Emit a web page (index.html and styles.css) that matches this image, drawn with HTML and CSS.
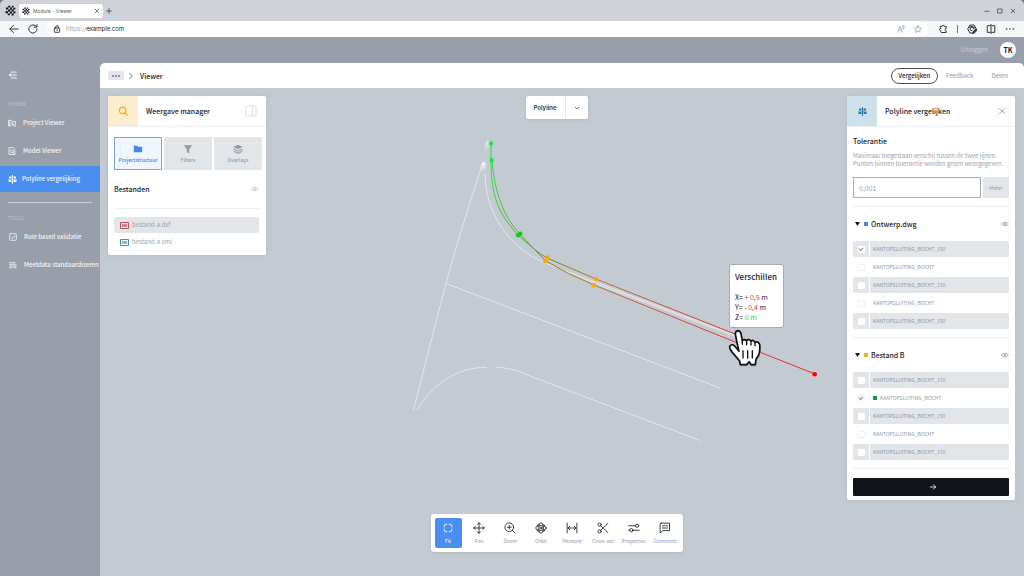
FILE: index.html
```html
<!DOCTYPE html>
<html lang="nl">
<head>
<meta charset="utf-8">
<meta name="viewport" content="width=device-width, initial-scale=1">
<title>Module - Viewer</title>
<link rel="stylesheet" href="styles.css">
</head>
<body>
<svg class="defs" aria-hidden="true">
  <symbol id="mark" viewBox="0 0 12 12"><path d="M3.500 .8h2.200v2H3.500zM7.500 .8h1.800v2H7.500zM1 2.800h2.500v2.200H1zM5.500 2.800h2v2.400h-2zM9 3h2.200v2H9zM3.300 4.900h2.300v2.200H3.300zM7.300 5h2.200v2H7.300zM.6 6.900h2.700v2H.6zM5.300 7h2.200v2.200H5.300zM9.200 7h2.200v2H9.200zM3 9.200h2.300v2H3zM7.300 9.200h2.200v2.200H7.300z"/></symbol>
  <symbol id="eye" viewBox="0 0 12 12"><path d="M.8 6C3.500 2.300 8.500 2.300 11.200 6C8.500 9.700 3.500 9.700 .8 6Z"/><circle cx="6" cy="6" r=".9"/></symbol>
  <symbol id="compare" viewBox="0 0 9 9"><path d="M1 1.500h2.500v2H1zM.5 5h3v2h-3zM5.500 1.500H8v2H5.500zM5.500 5h3v2h-3zM4 0h1v9H4z"/><path d="M0 3.900h9v.8H0z" opacity=".6"/></symbol>
</svg>
<div class="browser">
  <div class="tabs-bar">
    <svg class="logo" aria-hidden="true"><use href="#mark"/></svg>
    <div class="tab">
      <svg class="tab-logo" aria-hidden="true"><use href="#mark"/></svg>
      <span class="tab-title">Module - Viewer</span>
      <button class="bare" aria-label="Sluit tabblad"><svg class="ico ico-6" viewBox="0 0 12 12"><path d="M2 2l8 8M10 2l-8 8"/></svg></button>
    </div>
    <button class="bare new-tab" aria-label="Nieuw tabblad"><svg class="ico ico-6" viewBox="0 0 12 12"><path d="M6 1v10M1 6h10"/></svg></button>
    <div class="window-buttons">
      <button class="bare" aria-label="Minimaliseren"><svg class="ico ico-6" viewBox="0 0 12 12"><path d="M2 6.500h8"/></svg></button>
      <button class="bare" aria-label="Maximaliseren"><svg class="ico ico-6" viewBox="0 0 12 12"><rect x="2" y="2" width="8" height="8"/></svg></button>
      <button class="bare" aria-label="Sluiten"><svg class="ico ico-6" viewBox="0 0 12 12"><path d="M2.500 2.500l7 7M9.500 2.500l-7 7"/></svg></button>
    </div>
  </div>
  <div class="address-bar">
    <button class="bare" aria-label="Terug"><svg class="ico ico-10" viewBox="0 0 12 12"><path d="M11 6H1M5.500 1.500L1 6l4.500 4.500"/></svg></button>
    <button class="bare reload" aria-label="Vernieuwen"><svg class="ico ico-10" viewBox="0 0 12 12"><path d="M10.800 6A4.900 4.900 0 1 1 9 2.200L10.500 3.500M10.700 .6v3.200H7.500"/></svg></button>
    <div class="address">
      <svg class="ico ico-8" viewBox="0 0 12 12"><rect x="2" y="4.500" width="8" height="6.500" rx="1"/><path d="M4 4.500V3a2 2 0 0 1 4 0v1.500M6 7v1.500"/></svg>
      <span class="url"><span class="scheme">https://</span>example.com</span>
      <svg class="ico ico-8 soft" viewBox="0 0 12 12"><path d="M1 11L4.500 2L8 11M2.300 8h4.400M8.300 1.500q1.500 1.500 0 3.500M10 .5q2 2.500 0 5.500"/></svg>
      <svg class="ico ico-8 soft star" viewBox="0 0 12 12"><path d="M6 .8l1.600 3.500 3.800.4-2.800 2.600.8 3.800L6 9.200l-3.400 1.900.8-3.800L.6 4.700l3.800-.4z"/></svg>
    </div>
    <div class="extensions">
      <svg class="ico ico-10" viewBox="0 0 12 12"><path d="M3.200 2.800H5a1.300 1.300 0 0 1 2.600 0h2.200v2.500a1.300 1.300 0 0 0 0 2.600v2.300H4.500A1.300 1.300 0 0 1 3.200 9V7.800a1.300 1.300 0 0 1 0-2.600z"/></svg>
      <span class="rule"></span>
      <svg class="ico ico-10" viewBox="0 0 12 12"><path d="M6.500 10.800H3.500L.8 6l2.700-4.800h5L11.200 6M2 4.200L6 2.800l3.500 2"/><path d="M6 8.200A2.200 2.200 0 1 1 8.200 6"/><path d="M11.200 6.500v2L8 11.500H6.500L8 8.500z" fill="currentColor"/></svg>
      <svg class="ico ico-10" viewBox="0 0 12 12"><path d="M5 2H1.500v8H5M7 2h3.500v8H7M6 .5v11"/></svg>
      <svg class="ico ico-10" viewBox="0 0 12 12"><g fill="currentColor" stroke="none"><circle cx="2" cy="6" r="1"/><circle cx="6" cy="6" r="1"/><circle cx="10" cy="6" r="1"/></g></svg>
    </div>
  </div>

  <div class="app">
    <header class="user-bar">
      <a class="logout" href="#">Uitloggen</a>
      <span class="avatar">TK</span>
    </header>
    <div class="app-body">
      <nav class="sidebar">
        <button class="bare collapse" aria-label="Menu inklappen"><svg class="ico ico-10" viewBox="0 0 12 12"><path d="M4 2.500h6M5 6h5M4 9.500h6"/><path d="M.5 6l3.500-2.500v5z" fill="currentColor" stroke="none"/></svg></button>
        <h2 class="nav-label">VIEWER</h2>
        <a class="nav-item" href="#"><svg class="ico ico-8" viewBox="0 0 12 12"><path d="M8.500 10.500h2.800V3.800H6.500L5.500 2H.8v8.500h3.500"/><circle cx="6.300" cy="7.200" r="1.600"/><path d="M7.500 8.500L9 10M2.500 2v8"/></svg>Project Viewer</a>
        <a class="nav-item" href="#"><svg class="ico ico-8" viewBox="0 0 12 12"><path d="M2 .8h5.500L10.300 3.500v7.800H2z"/><path d="M6 4.500l2 1v2.300l-2 1-2-1V5.500zM7 8l2.500 2.500"/></svg>Model Viewer</a>
        <a class="nav-item active" href="#" aria-current="page"><svg class="compare-icon"><use href="#compare"/></svg>Polyline vergelijking</a>
        <hr class="nav-rule">
        <h2 class="nav-label">TOOLS</h2>
        <a class="nav-item tools" href="#"><svg class="ico ico-8" viewBox="0 0 12 12"><rect x="1" y="1" width="10" height="10" rx="1"/><path d="M3.300 6l2 2.200 3.600-4.200"/></svg>Rule based validatie</a>
        <a class="nav-item tools" href="#"><svg class="ico ico-8" viewBox="0 0 12 12"><path d="M1 2.500h8M1 5h10M1 7.500h5M1 10h4M7 8.800h4M9 6.800v4"/></svg>Meetdata standaardiseren</a>
      </nav>

      <main class="main">
        <div class="crumb-bar">
          <button class="more" aria-label="Meer"><i></i><i></i><i></i></button>
          <svg class="ico ico-8 crumb-arrow" viewBox="0 0 12 12"><path d="M4 2l4 4-4 4"/></svg>
          <h1 class="crumb">Viewer</h1>
          <button class="compare-btn">Vergelijken</button>
          <button class="text-btn">Feedback</button>
          <button class="text-btn share">Delen</button>
        </div>

        <div class="viewport">
          <svg class="scene" viewBox="100 88 924 488" preserveAspectRatio="xMinYMin meet" aria-label="Polylijnen">
            <defs>
              <linearGradient id="heat" gradientUnits="userSpaceOnUse" x1="491" y1="170" x2="735" y2="335"><stop offset="0" stop-color="#2be045"/><stop offset=".27" stop-color="#64a02c"/><stop offset=".36" stop-color="#93821f"/><stop offset=".6" stop-color="#bf6c38"/><stop offset="1" stop-color="#e2352f"/></linearGradient>
              <linearGradient id="fade" x1="0" y1="0" x2="0" y2="1"><stop offset="0" stop-color="#fff"/><stop offset="1" stop-color="#fff" stop-opacity="0"/></linearGradient>
            </defs>
            <g class="line-faint"><path d="M443 300L787 435"/><path d="M405 447Q440 404 483 404Q510 403 530 410L653 458"/></g>
            <path d="M485 144l2-3h2v6l-4 5h-1z" fill="url(#fade)" opacity=".6"/>
            <path d="M480.500 167q1-5 4-5l1 1v8l-5 1z" fill="url(#fade)"/>
            <g class="line-white">
              <path d="M482 165Q461 229 446 283L413.500 410"/>
              <path d="M446 283.500L720 388"/>
              <path d="M417 410C431 386 456 367 487 367.300"/>
              <path d="M495.500 367.300Q511 367.500 525 374L700 440.500"/>
              <path d="M485 173C485 208 504 245 545 263L737 336"/>
            </g>
            <path class="line-soft" d="M567 273L737 337"/>
            <g class="line-heat">
              <path d="M491 144V160C491 196 498 213 518 235L534 249L546 261Q567 274 594 285L745 346"/>
              <path d="M492 160C494 190 503 217 520 234L534 249Q540 254 547 258L596 279L735 334"/>
            </g>
            <path class="line-red" d="M735 334L762 353L815 374"/>
            <g fill="#10ee38"><circle cx="491" cy="143.500" r="2.200"/><circle cx="491.700" cy="160.200" r="2.200"/></g>
            <g fill="#0bcf16"><circle cx="518.200" cy="235.300" r="2.300"/><circle cx="520.200" cy="233.800" r="2.300"/></g>
            <g fill="#ffa40a"><circle cx="547.500" cy="257.500" r="2.300"/><circle cx="545.300" cy="261.200" r="2.300"/><circle cx="596" cy="279" r="2.300"/><circle cx="593.800" cy="285.300" r="2.300"/></g>
            <circle cx="814.700" cy="374.200" r="2.300" fill="#f00"/>
            <g class="hand" transform="translate(640 240) scale(.3333)">
              <path fill="#fff" d="M290 302L286 282Q286 273 294 272Q301 273 303 281L307 302Q313 296 319 302Q326 296 333 303Q340 298 345 307Q355 303 359 313Q361 332 356 346L348 358L346 374H333L328 365L320 374H301L299 363L284 345Q268 328 269 319Q275 310 284 318L297 334Z"/>
              <path class="knuckles" d="M307 300v13M320 302v12M333 304v11M345 307v10M309 332v22M323 332v22M337 332v22"/>
            </g>
          </svg>

          <section class="card manager">
            <header class="card-head">
              <span class="head-icon yellow"><svg class="ico ico-10" viewBox="0 0 12 12"><circle cx="5.500" cy="5.300" r="3.800"/><path d="M8 8.200l3 3"/></svg></span>
              <h2 class="card-title">Weergave manager</h2>
              <button class="bare panel-toggle" aria-label="Paneel"><svg class="ico" viewBox="0 0 12 12"><rect x="1" y="1" width="10" height="10" rx="1.500"/><path d="M7.500 1v10"/></svg></button>
            </header>
            <div class="manager-body">
              <div class="view-tabs">
                <button class="view-tab selected"><svg viewBox="0 0 12 12"><path d="M1 2h4l1 1.300h5V10H1z"/></svg>Projectstructuur</button>
                <button class="view-tab"><svg viewBox="0 0 12 12"><path d="M1 1.500h10L7.500 6.300v5.200L4.600 9.500V6.300z"/></svg>Filters</button>
                <button class="view-tab"><svg viewBox="0 0 12 12"><path d="M6 .8L11.500 3.500L6 6.200L.5 3.500z"/><path d="M.7 5.500L6 8l5.300-2.500v1.300L6 9.300.7 6.800zM.7 8.200L6 10.600l5.300-2.400v1.200L6 12 .7 9.400z"/></svg>Overlays</button>
              </div>
              <div class="section-head"><h3>Bestanden</h3><button class="bare eye light" aria-label="Toon bestanden"><svg class="ico"><use href="#eye"/></svg></button></div>
              <hr>
              <ul class="files">
                <li class="shaded"><svg class="file-icon red" viewBox="0 0 18 14"><path d="M1 1h16v12H1z"/><path class="label-mark" d="M3.500 4.500h11v5h-11z"/></svg>bestand-a.dxf</li>
                <li><svg class="file-icon teal" viewBox="0 0 18 14"><path d="M1 1h16v12H1z"/><path class="label-mark" d="M3.500 4.500h11v5h-11z"/></svg>bestand-a.xml</li>
              </ul>
            </div>
          </section>

          <div class="center">
            <div class="mode">
              <button class="mode-name">Polyline</button>
              <button class="mode-open" aria-label="Kies modus"><svg class="ico ico-6" viewBox="0 0 12 12"><path d="M2.500 4.500L6 8l3.500-3.500"/></svg></button>
            </div>
            <div class="toolbar">
              <button class="tool on"><svg class="ico" viewBox="0 0 16 16"><path d="M3 6.500V5q0-2 2-2h1.500M9.500 3H11q2 0 2 2v1.500M13 9.500V11q0 2-2 2H9.500M6.500 13H5q-2 0-2-2V9.500"/></svg>Fit</button>
              <button class="tool"><svg class="ico" viewBox="0 0 16 16"><path d="M8 1v14M1 8h14M6 3l2-2 2 2M6 13l2 2 2-2M3 6L1 8l2 2M13 6l2 2-2 2"/></svg>Pan</button>
              <button class="tool"><svg class="ico" viewBox="0 0 16 16"><circle cx="7" cy="7" r="5.800"/><path d="M11.200 11.200L15 15M7 4.500v5M4.500 7h5"/></svg>Zoom</button>
              <button class="tool"><svg class="ico" viewBox="0 0 16 16"><ellipse cx="8" cy="8" rx="3" ry="7"/><ellipse cx="8" cy="8" rx="7" ry="3"/><circle cx="8" cy="8" r="1"/><path d="M3 5.500Q3 3 5.200 3.500M13 5.500Q13 3 10.800 3.500M3 10.500Q3 13 5.200 12.500M13 10.500Q13 13 10.800 12.500"/></svg>Orbit</button>
              <button class="tool"><svg class="ico" viewBox="0 0 16 16"><path d="M1.500 1.500v13M14.500 1.500v13M3 8h10M5 5.500L3 8l2 2.500M11 5.500L13 8l-2 2.500"/></svg>Measure</button>
              <button class="tool"><svg class="ico" viewBox="0 0 16 16"><circle cx="3.500" cy="3.500" r="2.200"/><circle cx="3.500" cy="12.500" r="2.200"/><path d="M5 5l9.500 9M5 11l9.500-9"/></svg>Cross-sec</button>
              <button class="tool"><svg class="ico" viewBox="0 0 16 16"><path d="M1 5h8.500M1 11h1.500M6.500 11H15"/><circle cx="12" cy="5" r="2.200"/><circle cx="4.500" cy="11" r="2.200"/></svg>Properties</button>
              <button class="tool"><svg class="ico" viewBox="0 0 16 16"><path d="M3 1.500h11v10H5L1.500 14.500V3q0-1.500 1.500-1.500zM4.500 5H8M4.500 8h7M10 5h1.500"/></svg>Comment</button>
            </div>
          </div>

          <section class="card compare">
            <header class="card-head">
              <span class="head-icon blue"><svg class="compare-icon"><use href="#compare"/></svg></span>
              <h2 class="card-title">Polyline vergelijken</h2>
              <button class="bare close" aria-label="Sluiten"><svg class="ico ico-8" viewBox="0 0 12 12"><path d="M2 2l8 8M10 2l-8 8"/></svg></button>
            </header>
            <div class="compare-body">
              <label class="field-title" for="tolerance">Tolerantie</label>
              <p class="hint">Maximaal toegestaan verschil tussen de twee lijnen.<br>Punten binnen tolerantie worden groen weergegeven.</p>
              <div class="field"><input class="number" id="tolerance" type="text" value="0,001"><button class="unit">Meter</button></div>
              <hr>
              <div class="group-head"><span class="caret"></span><span class="swatch s-blue"></span><h3>Ontwerp.dwg</h3><button class="bare eye" aria-label="Toon Ontwerp.dwg"><svg class="ico"><use href="#eye"/></svg></button></div>
              <div class="layers">
                <label class="layer shaded"><span class="tick"><input type="checkbox" checked></span><span class="layer-name">KANTOPSLUITING_BOCHT_150</span></label>
                <label class="layer"><span class="tick"><input type="checkbox"></span><span class="layer-name">KANTOPSLUITING_BOCHT</span></label>
                <label class="layer shaded"><span class="tick"><input type="checkbox"></span><span class="layer-name">KANTOPSLUITING_BOCHT_150</span></label>
                <label class="layer"><span class="tick"><input type="checkbox"></span><span class="layer-name">KANTOPSLUITING_BOCHT</span></label>
                <label class="layer shaded"><span class="tick"><input type="checkbox"></span><span class="layer-name">KANTOPSLUITING_BOCHT_150</span></label>
              </div>
              <hr>
              <div class="group-head"><span class="caret"></span><span class="swatch s-orange"></span><h3>Bestand B</h3><button class="bare eye" aria-label="Toon Bestand B"><svg class="ico"><use href="#eye"/></svg></button></div>
              <div class="layers">
                <label class="layer shaded"><span class="tick"><input type="checkbox"></span><span class="layer-name">KANTOPSLUITING_BOCHT_150</span></label>
                <label class="layer"><span class="tick"><input type="checkbox" checked></span><span class="layer-name"><span class="dot"></span>KANTOPSLUITING_BOCHT</span></label>
                <label class="layer shaded"><span class="tick"><input type="checkbox"></span><span class="layer-name">KANTOPSLUITING_BOCHT_150</span></label>
                <label class="layer"><span class="tick"><input type="checkbox"></span><span class="layer-name">KANTOPSLUITING_BOCHT</span></label>
                <label class="layer shaded"><span class="tick"><input type="checkbox"></span><span class="layer-name">KANTOPSLUITING_BOCHT_150</span></label>
              </div>
              <hr>
              <button class="go" aria-label="Vergelijk"><svg class="ico ico-8" viewBox="0 0 12 12"><path d="M2 6h8M6.500 2.500L10 6l-3.500 3.500"/></svg></button>
            </div>
          </section>

          <div class="tooltip" role="tooltip">
            <h3>Verschillen</h3>
            <p>X= <span class="bad">+ 0,5</span> m</p>
            <p>Y= <span class="bad">- 0,4</span> m</p>
            <p>Z= <span class="good">0 m</span></p>
          </div>
        </div>
      </main>
    </div>
  </div>
</div>
</body>
</html>
```
FILE: styles.css
```css
* { box-sizing: border-box; }
body { margin: 0; background: #70757f; color: #1c2026; font: 6px/8px "Noto Sans CJK SC", "Noto Sans", sans-serif; }
h1, h2, h3, p, ul { margin: 0; padding: 0; }
ul { list-style: none; }
a { color: inherit; text-decoration: none; }
button, input { font: inherit; color: inherit; margin: 0; }
button { border: 0; padding: 0; background: none; white-space: nowrap; }
hr { border: 0; height: 1px; margin: 0; background: #eef0f3; }
svg { display: block; flex: none; }
.defs { position: absolute; width: 0; height: 0; }
.ico { fill: none; stroke: currentColor; stroke-width: 1.2; stroke-linecap: round; stroke-linejoin: round; }
.ico-6 { width: 6px; height: 6px; }
.ico-8 { width: 8px; height: 8px; }
.ico-10 { width: 10px; height: 10px; }
.bare { display: flex; }

/* Browser frame */
.browser { display: flex; flex-direction: column; min-height: 100vh; border-radius: 5px 5px 0 0; overflow: hidden; background: #999eab; }
.tabs-bar { display: flex; align-items: center; height: 21px; padding: 0 5px; gap: 3px; background: #cfd2d9; font-family: Inter, sans-serif; }
.logo { width: 11px; height: 11px; fill: #111; }
.tab { display: flex; align-items: center; width: 84px; height: 14px; padding: 0 3px; gap: 3px; border-radius: 3px; background: #fff; }
.tab-logo { width: 8px; height: 8px; fill: #111; }
.tab-title { flex: 1; color: #555a62; font-size: 5px; }
.window-buttons { display: flex; gap: 7px; margin: 0 3px 0 auto; }
.address-bar { display: flex; align-items: center; height: 16px; padding: 0 9px; background: #f6f7f9; font-family: Inter, sans-serif; }
.reload { margin: 0 9px; }
.address { display: flex; align-items: center; flex: 1; height: 16px; padding: 0 6px; gap: 5px; border-radius: 8px; background: #fff; }
.star { margin-left: 4px; }
.url { flex: 1; font-size: 6px; }
.scheme { color: #a5abb5; }
.address .soft { color: #9ca3b2; }
.extensions { display: flex; align-items: center; gap: 9px; margin-left: 10px; }
.rule { width: 1px; height: 8px; background: #6d7280; }
.extensions, .address-bar .bare { color: #30343b; }

/* Application */
.app { display: flex; flex-direction: column; flex: 1; }
.user-bar { display: flex; align-items: center; justify-content: flex-end; height: 26px; gap: 12px; padding: 0 8px; }
.logout { color: #c9cdd6; }
.avatar { display: grid; place-items: center; width: 16px; height: 16px; border-radius: 50%; background: #fff; font-size: 7px; font-weight: 700; }
.app-body { display: flex; flex: 1; }
.sidebar { width: 100px; color: #f4f5f7; }
.collapse { margin: 7px 8px 0; }
.nav-label { margin: 20px 8px 2px; color: #bfc4cd; font-size: 5px; font-weight: 400; }
.nav-item { display: flex; align-items: center; gap: 7px; height: 26px; margin: 2px 0; padding-left: 8px; font-weight: 500; white-space: nowrap; }
.nav-item.active { gap: 5px; background: #4a8ff0; }
.compare-icon { width: 9px; height: 9px; fill: currentColor; }
.nav-rule { margin: 10px 8px; background: #c9cdd5; }
.nav-rule + .nav-label { margin-top: 11px; }
.nav-item.tools { padding-left: 9px; }
.main { display: flex; flex-direction: column; flex: 1; min-width: 0; border-radius: 5px 5px 0 0; overflow: hidden; background: #fff; }
.crumb-bar { display: flex; align-items: center; height: 25px; padding: 0 8px; color: #a0a6b4; font-weight: 500; }
.more { display: flex; align-items: center; justify-content: center; gap: 1px; width: 16px; height: 9px; border-radius: 1px; background: #e2e5e9; }
.more i { width: 2px; height: 2px; border-radius: 50%; background: #737b8b; }
.crumb-arrow { margin: 0 4px 0 3px; color: #4a5160; }
.crumb { flex: 1; padding-left: 1px; color: #1c2026; font-size: 7px; font-weight: 500; }
.compare-btn { width: 47px; height: 16px; border: 1px solid #4b4f55; border-radius: 8px; color: #1c2026; }
.text-btn { margin-left: 8px; }
.share { margin: 0 8px 0 18px; }

/* Drawing area */
.viewport { position: relative; display: flex; flex: 1; align-items: flex-start; padding: 8px 9px 24px 8px; background: #c4cad2; }
.scene { position: absolute; left: 0; top: 0; width: 100%; height: 100%; }
.scene path { stroke-width: 1; }
.line-white { fill: none; stroke: #e3e6ed; }
.line-soft { fill: none; stroke: #dfe2e9; }
.line-faint { fill: none; stroke: #c7c9cd; }
.line-heat { fill: none; stroke: url(#heat); }
.line-red { fill: none; stroke: #e23530; }
.scene .hand path { stroke: #111; stroke-width: 5; stroke-linejoin: round; stroke-linecap: round; }
.scene .hand .knuckles { stroke-width: 4; }
.hand { filter: drop-shadow(0 2px 2px #69708088); }
.card { position: relative; border-radius: 2px; background: #fff; box-shadow: 0 0 4px #a6acb880; overflow: hidden; }
.card-head { display: flex; align-items: center; height: 31px; border-bottom: 1px solid #eef0f3; }
.head-icon { display: grid; place-items: center; width: 30px; height: 30px; }
.yellow { background: #fdedcf; color: #f8ae24; }
.yellow .ico { stroke-width: 1.6; }
.blue { background: #cee1eb; color: #237ea5; }
.card-title { flex: 1; padding-left: 8px; font-size: 7px; font-weight: 500; }
.manager { width: 158px; }
.panel-toggle { margin-right: 9px; color: #dfe2e6; }
.panel-toggle .ico { width: 12px; height: 12px; }
.manager-body { padding: 10px 7px 5px 6px; }
.view-tabs { display: flex; gap: 2px; margin-right: -3px; }
.view-tab { display: flex; flex: 1 1 0; min-width: 0; flex-direction: column; align-items: center; justify-content: center; gap: 2px; height: 33px; border: 1px solid #e2e6e9; background: #e2e6e9; color: #9299a8; font-size: 5px; font-weight: 500; }
.view-tab svg { width: 10px; height: 10px; fill: currentColor; }
.view-tab.selected { border-color: #76a7ee; background: #eff6ff; color: #3d87ed; }
.section-head { display: flex; align-items: center; justify-content: space-between; height: 38px; }
h3 { font-size: 7px; font-weight: 500; }
.eye { color: #8f96a0; }
.eye .ico { width: 8px; height: 8px; }
.eye.light { color: #c0c6cf; }
.files { display: grid; gap: 1px; padding-top: 8px; color: #9aa1b0; }
.files li { display: flex; align-items: center; height: 16px; gap: 3px; padding-left: 6px; border-radius: 2px; }
.shaded { background: #e2e6e9; }
.file-icon { width: 9px; height: 7px; fill: none; stroke: currentColor; stroke-width: 2; }
.label-mark { fill: currentColor; stroke: none; opacity: .7; }
.red { color: #c34c59; }
.teal { color: #4a8fb0; }
.center { position: relative; display: flex; flex: 1; flex-direction: column; align-items: center; justify-content: space-between; align-self: stretch; }
.mode { display: flex; border-radius: 2px; background: #fff; box-shadow: 0 1px 3px #a6acb8a0; }
.mode-name { width: 40px; height: 23px; border-right: 1px solid #e5e8eb; color: #34383e; font-family: Inter, sans-serif; font-weight: 600; }
.mode-open { display: grid; place-items: center; width: 22px; }
.toolbar { display: flex; gap: 4px; padding: 4px; border-radius: 3px; background: #fff; box-shadow: 0 1px 3px #a6acb8a0; }
.tool { display: flex; flex-direction: column; align-items: center; justify-content: center; gap: 3px; width: 27px; height: 30px; color: #9299a8; font-size: 5px; }
.tool .ico { width: 12px; height: 12px; color: #26292e; }
.tool.on { border-radius: 2px; background: #4a8ff0; color: #fff; }
.tool.on .ico { color: #fff; }

/* Compare panel */
.compare { width: 168px; }
.close { margin-right: 9px; color: #8e949e; }
.compare-body { padding: 10px 6px 4px 6px; }
.field-title { display: block; font-size: 7px; font-weight: 500; }
.hint { margin: 7px 0 9px; color: #9ba2b1; white-space: nowrap; }
.field { display: flex; gap: 2px; margin-bottom: 8px; }
.number { flex: 1; min-width: 0; height: 21px; padding: 0 5px; border: 1px solid #a6acba; background: #fff; color: #969dad; font-size: 7px; }
.unit { width: 26px; border-radius: 1px; background: #e2e6e9; color: #9299a8; font-size: 5px; }
.group-head { display: flex; align-items: center; gap: 3px; height: 34px; }
.group-head h3 { flex: 1; }
.caret { width: 5px; height: 4px; margin: 0 1px 0 2px; background: #16191e; clip-path: polygon(0 0, 100% 0, 50% 100%); }
.swatch { width: 4px; height: 4px; }
.s-blue { background: #3d87ed; }
.s-orange { background: #f8ae24; }
.layers { display: grid; gap: 2px; padding-bottom: 8px; color: #8d95a5; font-size: 5px; }
.layer { display: flex; height: 16px; border-radius: 2px; }
.tick { display: grid; place-items: center; width: 17px; border-right: 1px solid #fff; }
.tick input { appearance: none; display: grid; place-items: center; width: 7px; height: 7px; padding-bottom: 1px; border: 1px solid #eef0f3; border-radius: 1px; background: #fff; }
.shaded .tick input { border-color: #fff; }
.tick input:checked::before { content: ""; box-sizing: border-box; width: 4px; height: 3px; border: solid #7e8592; border-width: 0 0 1px 1px; transform: rotate(-45deg); }
.layer-name { display: flex; align-items: center; gap: 3px; padding-left: 3px; white-space: nowrap; }
.dot { width: 4px; height: 4px; background: #13974b; }
.go { display: grid; place-items: center; width: 100%; height: 18px; margin-top: 9px; padding-left: 4px; border-radius: 1px; background: #111419; color: #fff; }
.tooltip { position: absolute; left: 629px; top: 176px; width: 55px; padding: 7px 5px 5px; border: 1px solid #a5abb9; border-radius: 3px; background: #fff; font-size: 7px; line-height: 10px; white-space: nowrap; }
.tooltip h3 { margin-bottom: 11px; font-size: 8px; line-height: 9px; }
.bad { color: #ee2434; }
.good { color: #18cf2c; }
```
